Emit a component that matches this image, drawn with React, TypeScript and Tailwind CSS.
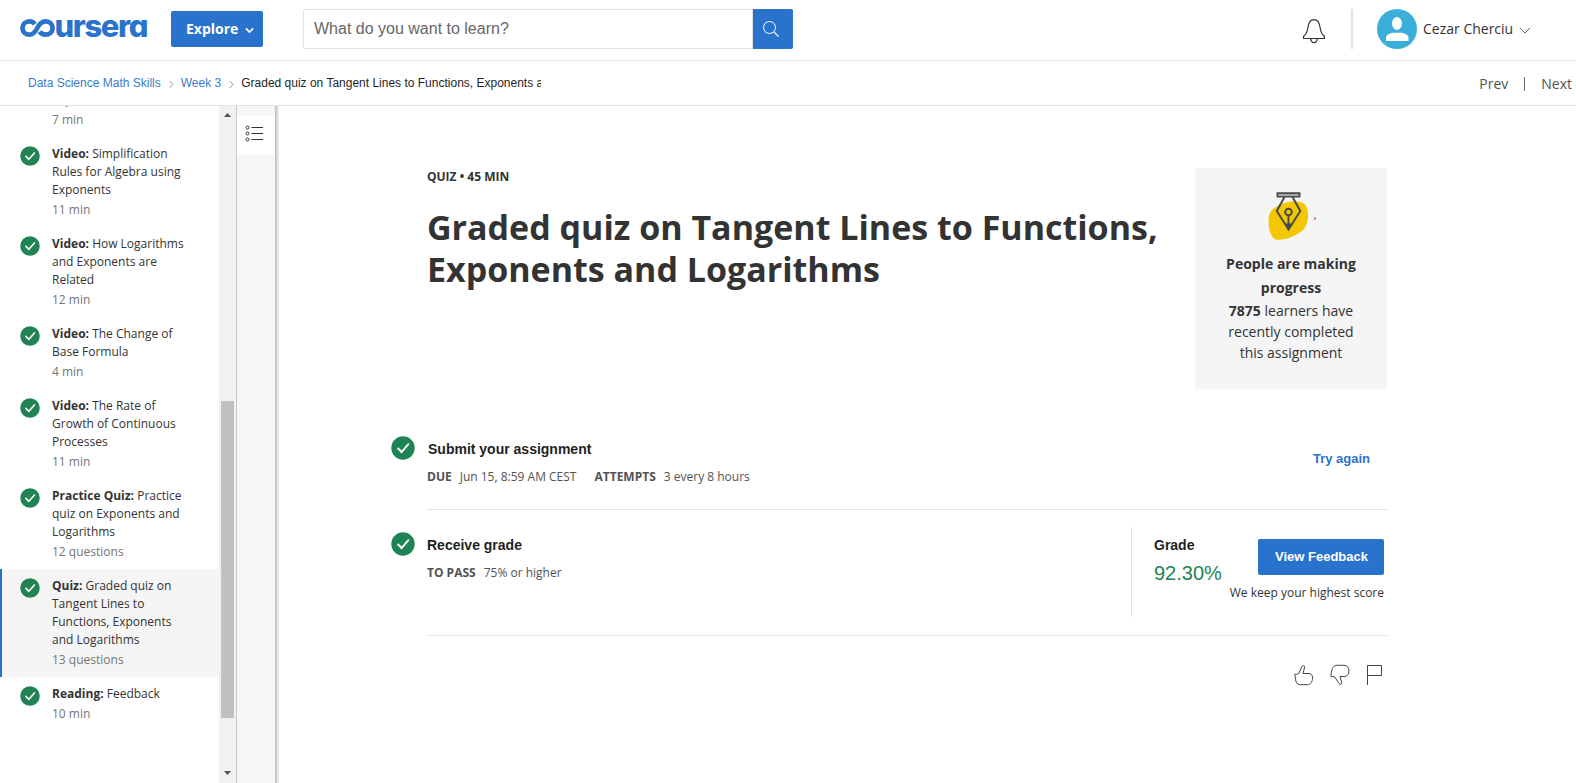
import type { ReactNode } from "react";

type Item = { kind: string; title: string; meta: string; active?: boolean };

const items: Item[] = [
  { kind: "Video", title: "Simplification Rules for Algebra using Exponents", meta: "11 min" },
  { kind: "Video", title: "How Logarithms and Exponents are Related", meta: "12 min" },
  { kind: "Video", title: "The Change of Base Formula", meta: "4 min" },
  { kind: "Video", title: "The Rate of Growth of Continuous Processes", meta: "11 min" },
  { kind: "Practice Quiz", title: "Practice quiz on Exponents and Logarithms", meta: "12 questions" },
  { kind: "Quiz", title: "Graded quiz on Tangent Lines to Functions, Exponents and Logarithms", meta: "13 questions", active: true },
  { kind: "Reading", title: "Feedback", meta: "10 min" },
];

function Check({ className }: { className: string }) {
  return (
    <svg viewBox="0 0 24 24" className={className}>
      <circle cx="12" cy="12" r="11.7" fill="#1f8354" />
      <path d="M6.6 11.8l4 4.2 7.2-8.3" fill="none" stroke="#fff" strokeWidth="1.9" />
    </svg>
  );
}

function Logo() {
  return (
    <svg viewBox="0 0 128 22" className="h-[22px] w-32 shrink-0" role="img" aria-label="coursera">
      <path
        d="M14.9 7.2C13.6 5.300 11.600 4.300 9.600 4.300 5.500 4.300 2.500 7.300 2.500 11s3 6.700 7 6.700c3.400 0 5.300-2.100 7.200-5.700C18.800 7.500 21.200 4.300 25.600 4.300c4 0 7 3 7 6.700s-3 6.700-7 6.700c-2.700 0-4.700-1.100-6-3"
        fill="none"
        stroke="#2a73cc"
        strokeWidth="4.800"
      />
      <text
        x="34.500"
        y="19.700"
        textLength="94"
        lengthAdjust="spacing"
        fill="#2a73cc"
        className="font-['Inter',sans-serif] text-[31px] font-extrabold [font-feature-settings:'cv11']"
      >
        ursera
      </text>
    </svg>
  );
}

function Crumb() {
  return (
    <svg viewBox="0 0 6 10" className="ml-2 mr-[7px] mt-[3px] h-[9px] w-[5px] shrink-0">
      <path d="M.7.700l4 4.300-4 4.300" fill="none" stroke="#888" strokeWidth="1.100" />
    </svg>
  );
}

function Header() {
  return (
    <header className="flex h-[61px] shrink-0 items-start border-b border-[#e1e1e1] pt-[9px]">
      <div className="ml-5 mt-2">
        <Logo />
      </div>
      <button className="ml-[23px] mt-0.5 flex h-9 w-[92px] items-center rounded-[2px] bg-[#2a73cc] pl-[15px] text-sm font-bold text-white">
        Explore
        <svg viewBox="0 0 10 7" className="ml-[7px] mt-0.5 h-[7px] w-[9px]">
          <path d="M1 1.200l4 4 4-4" fill="none" stroke="#fff" strokeWidth="2" />
        </svg>
      </button>
      <div className="ml-10 flex h-10 w-[490px]">
        <div className="flex flex-1 items-center rounded-l-[2px] border border-[#e1e1e1] pl-2.5 font-['Liberation_Sans',sans-serif] text-base text-[#666]">
          What do you want to learn?
        </div>
        <div className="flex w-10 items-center justify-center rounded-r-[2px] bg-[#2a73cc]">
          <svg viewBox="0 0 16 16" className="mr-1 h-4 w-4">
            <circle cx="6.500" cy="6.500" r="6" fill="none" stroke="#fff" />
            <path d="M10.800 10.800l4.800 4.800" fill="none" stroke="#fff" strokeWidth="1.200" />
          </svg>
        </div>
      </div>
      <svg viewBox="0 0 24 26" className="ml-[509px] mt-[9px] h-[26px] w-6" fill="none" stroke="#333" strokeWidth="1.200">
        <path d="M1.600 20.500v-2.300c2.400-1.500 3.600-4.200 4.200-8C6.400 5 7.800 1.600 12 1.600S17.600 5 18.200 10.200c.6 3.800 1.800 6.500 4.200 8v2.300z" />
        <path d="M8.800 21c.2 2.300 1.500 3.600 3.200 3.600s3-1.300 3.200-3.600" />
      </svg>
      <div className="ml-[25px] h-10 w-0.5 bg-[#e1e1e1]" />
      <svg viewBox="0 0 40 40" className="ml-6 h-10 w-10">
        <circle cx="20" cy="20" r="20" fill="#3bafda" />
        <ellipse cx="20" cy="14.500" rx="5" ry="6.500" fill="#fff" />
        <path d="M9 32v-3.500C9.300 25.500 13 24.300 16 23.800h8c3 .5 7.300 1.700 7.500 4.700V32z" fill="#fff" />
      </svg>
      <div className="ml-1.5 flex h-10 items-center text-sm text-[#333]">
        Cezar Cherciu
        <svg viewBox="0 0 12 7" className="ml-1.5 mt-[3px] h-[7px] w-3">
          <path d="M.8.800L6 6l5.200-5.200" fill="none" stroke="#666" />
        </svg>
      </div>
    </header>
  );
}

function Crumbs() {
  return (
    <nav className="flex h-[45px] shrink-0 items-center justify-between border-b border-[#e1e1e1]">
      <div className="ml-7 flex w-[513px] items-center overflow-hidden whitespace-nowrap font-['Liberation_Sans',sans-serif] text-xs text-[#1f1f1f]">
        <span className="text-[#3a7cc8]">Data Science Math Skills</span>
        <Crumb />
        <span className="text-[#3a7cc8]">Week 3</span>
        <Crumb />
        <span className="shrink-0">Graded quiz on Tangent Lines to Functions, Exponents and Logarithms</span>
      </div>
      <div className="flex items-center pr-1 pt-0.5 text-sm text-[#525252]">
        <span>Prev</span>
        <span className="mx-4 h-3.5 w-px bg-[#666]" />
        <span>Next</span>
      </div>
    </nav>
  );
}

function Sidebar() {
  return (
    <aside className="flex w-[219px] shrink-0 flex-col overflow-hidden text-xs leading-[18px] text-[#333]">
      <div className="-mt-[15px] h-[46px] shrink-0 pl-[52px]">
        <div>Exponents</div>
        <div className="mt-0.5 text-[#757575]">7 min</div>
      </div>
      {items.map((it, i) => (
        <div
          key={i}
          className={
            it.active
              ? "flex shrink-0 border-l-2 border-[#2a73cc] bg-[#f5f5f5] py-2 pl-[18px]"
              : "flex shrink-0 py-2 pl-5"
          }
        >
          <Check className="mt-px h-5 w-5 shrink-0" />
          <div className="ml-3 w-[140px]">
            <div>
              <b>{it.kind}:</b> {it.title}
            </div>
            <div className="mt-0.5 text-[#757575]">{it.meta}</div>
          </div>
        </div>
      ))}
    </aside>
  );
}

function Scrollbar() {
  return (
    <div className="flex w-[17px] shrink-0 flex-col items-center bg-[#f1f1f1]">
      <svg viewBox="0 0 7 4" className="mt-[7px] h-1 w-[7px]">
        <path d="M0 4L3.500 0 7 4z" fill="#505050" />
      </svg>
      <div className="mt-[284px] h-[317px] w-[13px] bg-[#c1c1c1]" />
      <svg viewBox="0 0 7 4" className="mt-[53px] h-1 w-[7px]">
        <path d="M0 0l3.500 4L7 0z" fill="#505050" />
      </svg>
    </div>
  );
}

function Rail() {
  return (
    <div className="flex w-[43px] shrink-0">
      <div className="w-[39px] border-l border-[#c9c9c9] bg-[#f6f6f6] pt-2.5">
        <div className="flex h-[38px] justify-start bg-white pl-2 pt-[9px]">
          <svg viewBox="0 0 18 18" className="h-[18px] w-[18px]" fill="none" stroke="#333">
            <circle cx="2.500" cy="2.500" r="1.500" />
            <circle cx="2.500" cy="8.500" r="1.500" />
            <circle cx="2.500" cy="14.500" r="1.500" />
            <path d="M6.500 2.500H18M6.500 8.500H18M6.500 14.500H18" />
          </svg>
        </div>
      </div>
      <div className="w-1 bg-linear-to-r from-[#bdbdbd] to-[#f4f4f4]" />
    </div>
  );
}

function Heading({ children }: { children: ReactNode }) {
  return <h2 className="font-['Liberation_Sans',sans-serif] text-sm font-bold leading-5 text-[#1f1f1f]">{children}</h2>;
}

function Progress() {
  return (
    <div className="flex h-[221px] w-48 shrink-0 flex-col items-center bg-[#f5f5f5] pt-6 text-center text-sm text-[#333]">
      <div className="flex items-end">
        <svg viewBox="0 0 42 48" className="ml-0.5 h-12 w-[42px]">
          <path
            d="M12.500 12.500C20 8.500 33 7.500 37.500 13c4 6 3.500 19-2.500 25-7 6.500-20 11-27.500 9.500C2 45 .3 35 .5 28.500.7 19 4.500 16.500 12.500 12.500z"
            fill="#f3c800"
          />
          <g fill="none" stroke="#4a4a4a" strokeWidth="2">
            <path d="M9.500 1.200h22v3.400h-22z" fill="#c9c9c9" strokeWidth="1.900" />
            <path d="M16.500 5L8.800 19 20.500 37.500 32.300 19 24.500 5" />
            <circle cx="20.500" cy="20" r="3.300" />
            <path d="M20.500 23.500v13" />
            <path d="M18 32.500l2.500 4.500 2.500-4.500z" fill="#4a4a4a" />
          </g>
        </svg>
        <span className="ml-1 pb-[18px] text-[10px] leading-[14px]">,</span>
      </div>
      <div className="mt-3 w-36 font-bold leading-6">People are making progress</div>
      <div className="w-36 leading-[21px]">
        <b>7875</b> learners have recently completed this assignment
      </div>
    </div>
  );
}

function Feedback() {
  return (
    <div className="mt-[28px] flex w-[996px] justify-end gap-4 pr-1">
      <svg viewBox="0 0 20 22" className="h-[22px] w-5" fill="none" stroke="#444" strokeWidth="1">
        <path d="M.800 10.300c1.200.1 2.600 0 3.700-.5L8 2.600c.7-1.600 3-1.200 2.700.6L9 9.500h6c2.500.2 3.700 2 3.600 4.500-.2 3.800-2.200 6.700-5 6.700H6.500c-3 0-4.600-2.200-5-5.400z" />
      </svg>
      <svg viewBox="0 0 20 22" className="h-[22px] w-5" fill="none" stroke="#444" strokeWidth="1">
        <path d="M.900 12.700C1.200 6.500 2.500 1.300 6.800 1.300H14c3.300 0 5 2.600 5 5.600 0 3.500-2 5.600-4.800 5.600H10l1.700 6c.4 1.900-1.600 2.600-2.600 1.200l-4.500-7z" />
      </svg>
      <svg viewBox="0 0 17 22" className="h-[22px] w-[17px]" fill="none" stroke="#444" strokeWidth="1">
        <path d="M1.500 21V1.500h14v10h-14" />
      </svg>
    </div>
  );
}

function Main() {
  return (
    <main className="flex-1 pl-28 pt-[62px]">
      <div className="ml-9 flex w-[960px] justify-between">
        <div>
          <div className="text-xs font-bold leading-[18px] text-[#333]">QUIZ • 45 MIN</div>
          <h1 className="mt-5 w-[744px] text-[34px] font-bold leading-[42px] text-[#333]">
            Graded quiz on Tangent Lines to Functions, Exponents and Logarithms
          </h1>
        </div>
        <Progress />
      </div>

      <section className="mt-[47px] flex">
        <Check className="h-6 w-6 shrink-0" />
        <div className="ml-3 flex h-[74px] w-[960px] justify-between border-b border-[#e1e1e1]">
          <div className="pl-px pt-[3px]">
            <Heading>Submit your assignment</Heading>
            <div className="-ml-px mt-[9px] flex text-xs leading-[18px] text-[#525252]">
              <b>DUE</b>
              <span className="ml-2">Jun 15, 8:59 AM CEST</span>
              <b className="ml-[18px]">ATTEMPTS</b>
              <span className="ml-2">3 every 8 hours</span>
            </div>
          </div>
          <a className="mr-[17px] mt-[13px] font-['Liberation_Sans',sans-serif] text-[13px] font-bold leading-5 text-[#2a73cc]">Try again</a>
        </div>
      </section>

      <section className="flex pt-[22px]">
        <Check className="h-6 w-6 shrink-0" />
        <div className="-mt-[22px] ml-3 flex h-[126px] w-[960px] justify-between border-b border-[#e1e1e1]">
          <div className="pt-[25px]">
            <Heading>Receive grade</Heading>
            <div className="mt-[9px] flex text-xs leading-[18px] text-[#525252]">
              <b>TO PASS</b>
              <span className="ml-2">75% or higher</span>
            </div>
          </div>
          <div className="mt-[17px] flex h-[90px] w-[256px] border-l border-[#e1e1e1] pl-[22px]">
            <div className="w-[72px] shrink-0 pt-2">
              <Heading>Grade</Heading>
              <div className="mt-1.5 font-['Liberation_Sans',sans-serif] text-xl leading-6 text-[#1f8354]">92.30%</div>
            </div>
            <div className="flex w-[158px] shrink-0 flex-col items-end whitespace-nowrap pt-3">
              <button className="h-9 w-[126px] rounded-[2px] bg-[#2a73cc] pl-px font-['Liberation_Sans',sans-serif] text-[13px] font-bold text-white">
                View Feedback
              </button>
              <div className="mt-[9px] text-xs leading-[18px] text-[#333]">We keep your highest score</div>
            </div>
          </div>
        </div>
      </section>
      <Feedback />
    </main>
  );
}

export default function App() {
  return (
    <div className="flex h-[783px] w-[1576px] flex-col overflow-hidden bg-white font-['Open_Sans',sans-serif]">
      <Header />
      <Crumbs />
      <div className="flex min-h-0 flex-1">
        <Sidebar />
        <Scrollbar />
        <Rail />
        <Main />
      </div>
    </div>
  );
}
